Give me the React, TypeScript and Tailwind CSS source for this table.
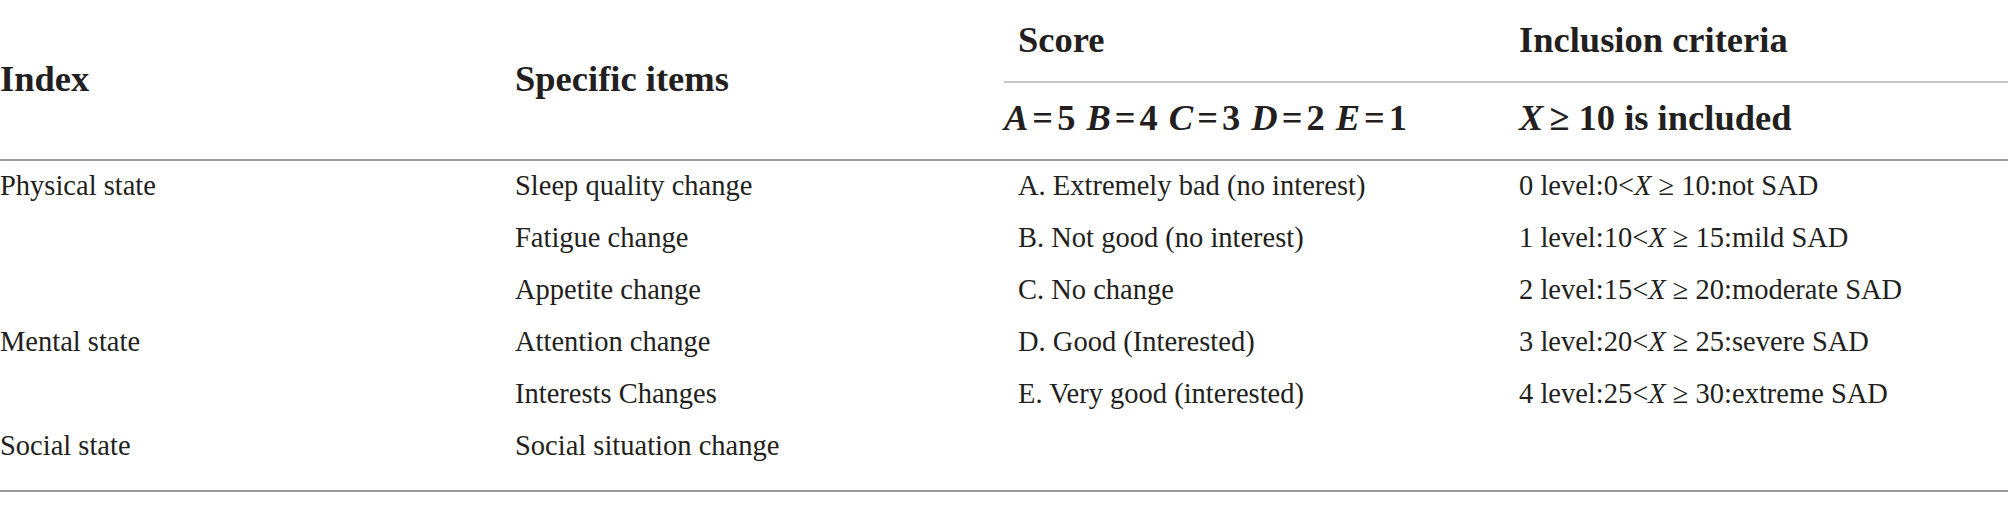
import React from "react"

const rows = [
  { index: "Physical state", item: "Sleep quality change", score: "A. Extremely bad (no interest)", level: "0", range: ["0", "10"], label: "not SAD" },
  { index: "", item: "Fatigue change", score: "B. Not good (no interest)", level: "1", range: ["10", "15"], label: "mild SAD" },
  { index: "", item: "Appetite change", score: "C. No change", level: "2", range: ["15", "20"], label: "moderate SAD" },
  { index: "Mental state", item: "Attention change", score: "D. Good (Interested)", level: "3", range: ["20", "25"], label: "severe SAD" },
  { index: "", item: "Interests Changes", score: "E. Very good (interested)", level: "4", range: ["25", "30"], label: "extreme SAD" },
  { index: "Social state", item: "Social situation change", score: "", level: "", range: null as string[] | null, label: "" },
]

const scores = [
  ["A", "5"],
  ["B", "4"],
  ["C", "3"],
  ["D", "2"],
  ["E", "1"],
]

export default function App() {
  return (
    <div className="w-[2008px] h-[509px] bg-white text-[#231f20] font-['Liberation_Serif',serif]">
      {/* header */}
      <div className="grid grid-cols-[515px_489px_515px_1fr] grid-rows-[83px_76px] border-b-2 border-[#9b9b9b] text-[36.5px] font-bold leading-none">
        <div className="row-span-2 flex items-center">Index</div>
        <div className="row-span-2 flex items-center">Specific items</div>
        <div className="col-span-2 grid grid-cols-[515px_1fr] border-b-2 border-[#c4c4c4]">
          <div className="flex items-center pl-[14px]">Score</div>
          <div className="flex items-center">Inclusion criteria</div>
        </div>
        <div className="flex items-center gap-[11px] pb-[6px]">
          {scores.map(([l, n]) => (
            <span key={l} className="whitespace-nowrap">
              <i>{l}</i>
              <span className="px-[4px]">=</span>
              {n}
            </span>
          ))}
        </div>
        <div className="flex items-center pb-[6px]">
          <i>X</i>
          <span className="pl-[6px]">≥ 10 is included</span>
        </div>
      </div>

      {/* body */}
      <div className="border-b-2 border-[#9b9b9b] pb-[17px] text-[28.5px] leading-none">
        {rows.map((r, i) => (
          <div key={i} className="grid h-[52px] grid-cols-[515px_503px_501px_1fr] items-center pb-[2px]">
            <div>{r.index}</div>
            <div>{r.item}</div>
            <div>{r.score}</div>
            <div className="whitespace-nowrap">
              {r.range && (
                <>
                  {r.level} level:{r.range[0]}&lt;<i>X</i> ≥ {r.range[1]}:{r.label}
                </>
              )}
            </div>
          </div>
        ))}
      </div>
    </div>
  )
}
